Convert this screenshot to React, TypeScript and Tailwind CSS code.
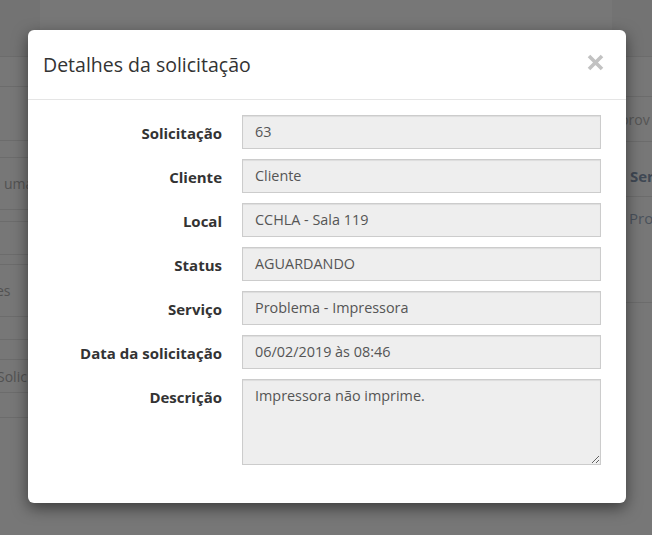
import React from 'react';

type Field = { label: string; value: string; multiline?: boolean };

const fields: Field[] = [
  { label: 'Solicitação', value: '63' },
  { label: 'Cliente', value: 'Cliente' },
  { label: 'Local', value: 'CCHLA - Sala 119' },
  { label: 'Status', value: 'AGUARDANDO' },
  { label: 'Serviço', value: 'Problema - Impressora' },
  { label: 'Data da solicitação', value: '06/02/2019 às 08:46' },
  { label: 'Descrição', value: 'Impressora não imprime.', multiline: true },
];

const App: React.FC = () => {
  return (
    <div className="relative w-full h-[535px] overflow-hidden bg-[#777777] font-['Open_Sans',sans-serif]">
      {/* página escurecida ao fundo */}
      <div className="flex justify-between h-full">
        <div className="w-[40px] flex flex-col text-[14px] text-[#525252]">
          <div className="h-[57px] bg-[#737373] border-b border-[#6c6c6c]" />
          <div className="h-[30px] border-b border-[#6c6c6c]" />
          <div className="h-[54px] border-b border-[#6c6c6c]" />
          <div className="h-[17px] border-b border-[#6c6c6c]" />
          <div className="h-[52px] border-b border-[#6c6c6c] flex items-center pl-[4px] whitespace-nowrap">uma</div>
          <div className="h-[12px] border-b border-[#6c6c6c]" />
          <div className="h-[33px] border-b border-[#6c6c6c]" />
          <div className="h-[10px] border-b border-[#6c6c6c]" />
          <div className="h-[52px] border-b border-[#6c6c6c] flex items-center -ml-[4px] whitespace-nowrap">es</div>
          <div className="h-[23px] border-b border-[#6c6c6c]" />
          <div className="h-[20px] border-b border-[#6c6c6c]" />
          <div className="h-[33px] border-b border-[#6c6c6c] flex items-center -ml-[3px] whitespace-nowrap">Solic</div>
          <div className="h-[25px] border-b border-[#6c6c6c]" />
        </div>
        <div className="w-[40px] flex flex-col text-[14px] text-[#4a525c]">
          <div className="h-[57px] bg-[#737373] border-b border-[#6c6c6c]" />
          <div className="h-[40px] border-b border-[#6c6c6c]" />
          <div className="h-[45px] border-b border-[#6c6c6c] flex items-center pl-[8px] whitespace-nowrap text-[#555]">prov</div>
          <div className="h-[55px] border-b border-[#6c6c6c] flex items-center pl-[18px] pt-[14px] whitespace-nowrap font-bold text-[15px] text-[#3f4854]">Ser</div>
          <div className="h-[106px] border-b border-[#6c6c6c] pl-[17px] pt-[10px] whitespace-nowrap text-[15px]">Pro</div>
        </div>
      </div>

      {/* modal */}
      <div className="absolute left-[28px] top-[30px] w-[598px] bg-white rounded-[6px] shadow-[0_5px_15px_rgba(0,0,0,0.5)]">
        <div className="h-[70px] flex items-center justify-between pl-[15px] pr-[22px] border-b border-[#e5e5e5]">
          <h4 className="text-[19.5px] text-[#333] leading-[26px]">Detalhes da solicitação</h4>
          <button className="-mt-[5px] text-[#c2c2c2]" aria-label="Fechar">
            <svg width="17" height="17" viewBox="0 0 17 17">
              <path d="M2 2 L15 15 M15 2 L2 15" stroke="currentColor" strokeWidth="3.6" strokeLinecap="butt" />
            </svg>
          </button>
        </div>
        <div className="pt-[15px] pb-[38px] flex flex-col gap-[10px]">
          {fields.map((f) => (
            <div key={f.label} className="flex items-start">
              <label className="w-[194px] text-right text-[15px] font-bold text-[#333] leading-[20px] pt-[8px]">
                {f.label}
              </label>
              <div className="ml-[20px] w-[359px]">
                {f.multiline ? (
                  <textarea
                    readOnly
                    value={f.value}
                    className="block w-full h-[86px] px-[12px] py-[6px] bg-[#eeeeee] border border-[#cccccc] text-[14.4px] leading-[20px] text-[#555] outline-none shadow-[inset_0_1px_1px_rgba(0,0,0,0.075)]"
                  />
                ) : (
                  <div className="h-[34px] flex items-center px-[12px] bg-[#eeeeee] border border-[#cccccc] text-[14.4px] text-[#555] shadow-[inset_0_1px_1px_rgba(0,0,0,0.075)]">
                    {f.value}
                  </div>
                )}
              </div>
            </div>
          ))}
        </div>
      </div>
    </div>
  );
};

export default App;
